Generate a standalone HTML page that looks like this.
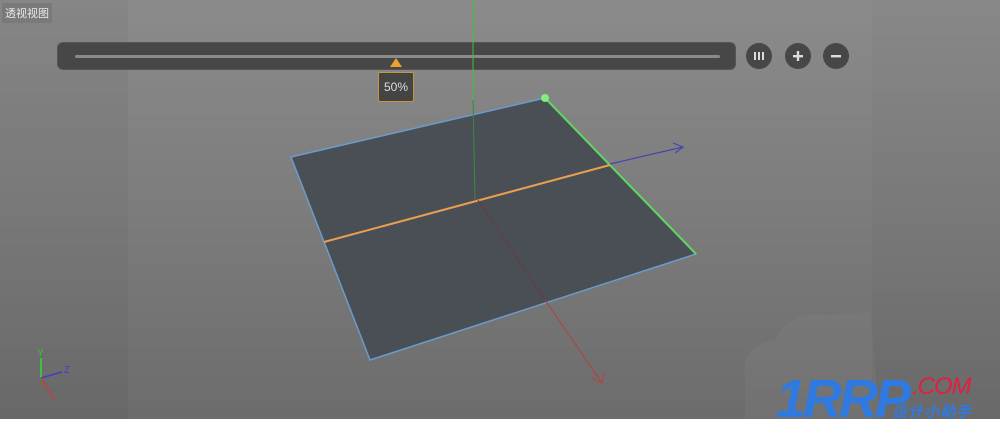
<!DOCTYPE html>
<html><head><style>
body{margin:0;width:1000px;height:419px;overflow:hidden;font-family:"Liberation Sans","Noto Sans CJK SC",sans-serif;}
#bg{position:absolute;inset:0;background:linear-gradient(#8b8b8b,#7c7c7c 50%,#6c6c6c);}
</style></head><body>
<div id="bg"></div>
<div style="position:absolute;left:0;top:0;width:128px;height:419px;background:rgba(0,0,0,0.03)"></div>
<div style="position:absolute;left:872px;top:0;width:128px;height:419px;background:rgba(0,0,0,0.02)"></div>
<div style="position:absolute;left:2px;top:3px;padding:2px 3px;background:#7a7a7a;color:#e8e8e8;font-size:11px">透视视图</div>
<div style="position:absolute;left:58px;top:43px;width:677px;height:26px;background:#474747;border-radius:5px;box-shadow:0 0 0 1px #555"></div>
<div style="position:absolute;left:75px;top:55px;width:645px;height:3px;background:#8a8a8a;border-radius:2px"></div>
<svg style="position:absolute;left:389px;top:57px" width="14" height="11"><polygon points="7,1 13,10 1,10" fill="#f0a030"/></svg>
<div style="position:absolute;left:378px;top:72px;width:34px;height:28px;background:#444;border:1px solid #c8963a;border-radius:2px;color:#ddd;font-size:12px;line-height:28px;text-align:center">50%</div>
<svg style="position:absolute;left:745px;top:43px" width="110" height="28">
<circle cx="14" cy="13" r="13" fill="#474747"/><rect x="9" y="9" width="2" height="8" fill="#ddd"/><rect x="13" y="9" width="2" height="8" fill="#ddd"/><rect x="17" y="9" width="2" height="8" fill="#ddd"/>
<circle cx="53" cy="13" r="13" fill="#474747"/><rect x="48" y="12" width="10" height="2.4" fill="#ddd"/><rect x="51.8" y="8" width="2.4" height="10" fill="#ddd"/>
<circle cx="91" cy="13" r="13" fill="#474747"/><rect x="86" y="12" width="10" height="2.4" fill="#ddd"/>
</svg>
<svg style="position:absolute;left:0;top:0" width="1000" height="419">
<path d="M745,419 L745,380 Q740,345 775,340 Q790,310 830,315 L870,312 L880,419 Z" fill="rgba(255,255,255,0.035)"/>
<line x1="473" y1="0" x2="473" y2="200" stroke="#3fbf3f" stroke-width="1"/>
<polygon points="291,157 545,98 696,254 370,360" fill="#4a4e55" stroke="#6a9ccc" stroke-width="1.5"/>
<line x1="473" y1="100" x2="475" y2="200" stroke="#3b8a3b" stroke-width="1"/>
<line x1="545" y1="98" x2="696" y2="254" stroke="#5ed85e" stroke-width="2"/>
<circle cx="545" cy="98" r="4" fill="#7ef07e"/>
<line x1="324" y1="242" x2="610" y2="165" stroke="#e8a050" stroke-width="2"/>
<line x1="478" y1="200" x2="545" y2="300" stroke="#6a3c40" stroke-width="1"/>
<line x1="545" y1="300" x2="602" y2="383" stroke="#b04040" stroke-width="1"/>
<polyline points="592,378 602,383 604,372" fill="none" stroke="#c04040" stroke-width="1"/>
<line x1="610" y1="164" x2="683" y2="147" stroke="#4545b0" stroke-width="1.2"/>
<polyline points="673,143 683,147 675,153" fill="none" stroke="#4545b0" stroke-width="1.2"/>
<line x1="41" y1="358" x2="41" y2="378" stroke="#40c040" stroke-width="2"/>
<text x="37" y="356" fill="#40c040" font-size="10">Y</text>
<line x1="41" y1="378" x2="62" y2="372" stroke="#4040c0" stroke-width="1.5"/>
<text x="64" y="373" fill="#4040c0" font-size="10">Z</text>
<line x1="41" y1="378" x2="52" y2="396" stroke="#c04040" stroke-width="1.5"/>
<text x="50" y="401" fill="#c04040" font-size="9">X</text>
</svg>
<div style="position:absolute;left:776px;top:372px;color:#2f7ae0;font-size:54px;font-weight:bold;font-style:italic;letter-spacing:-3px;line-height:54px">1RRP</div>
<div style="position:absolute;left:912px;top:373px;color:#e02040;font-size:24px;font-style:italic;letter-spacing:-1px">.COM</div>
<div style="position:absolute;left:892px;top:401px;color:#2f7ae0;font-size:15px;font-weight:bold;font-style:italic;letter-spacing:1px">设计小助手</div>
</body></html>
